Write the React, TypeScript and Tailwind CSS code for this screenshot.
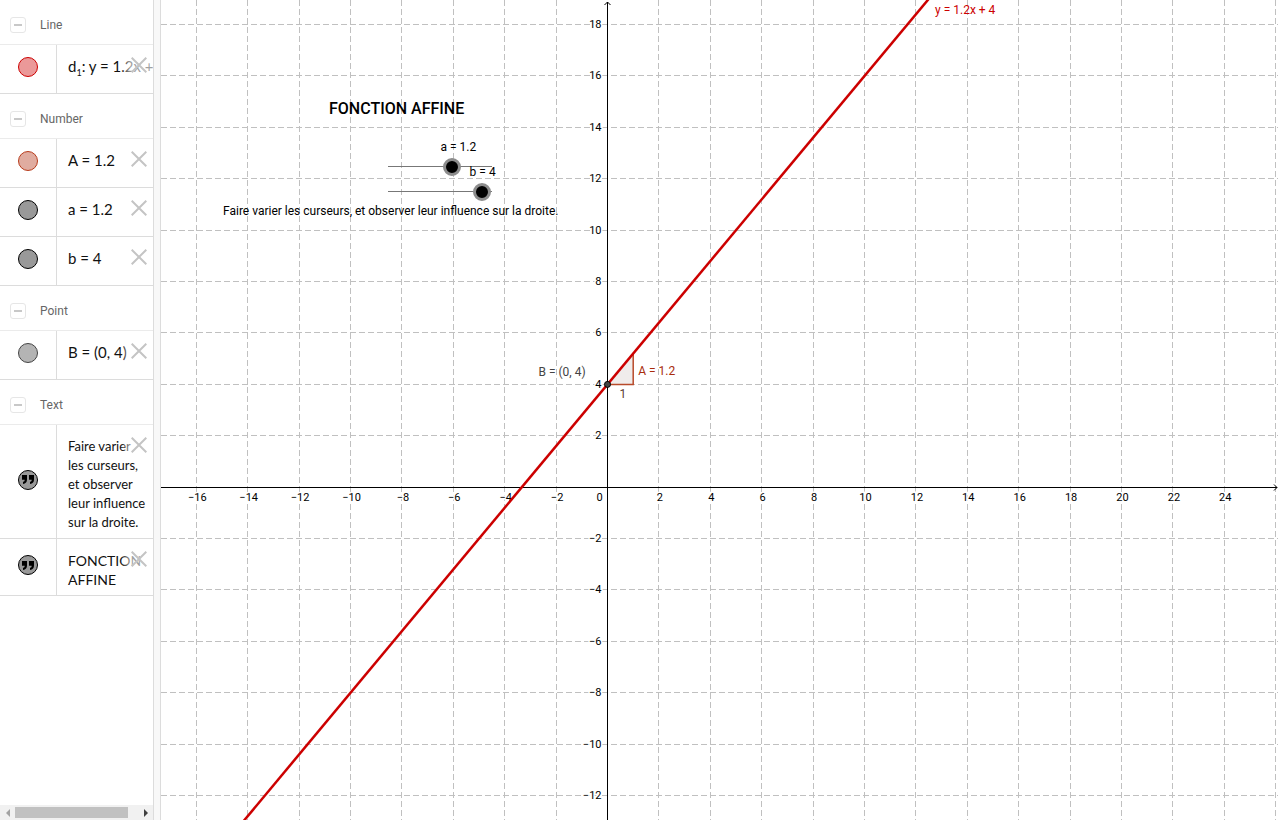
import { useLayoutEffect, useRef, useState } from "react";
import type { ReactNode } from "react";

const UNIT = 25.7;
const ORIGIN = { x: 446, y: 487 };
const SLIDER = { left: 227, width: 104, min: -5, max: 5 };

const fmt = (n: number) => String(n).replace("-", "−");

function Header({ title }: { title: string }) {
  return (
    <h2 className="flex h-[45px] items-center border-b border-[#ebebeb] pt-1.5 pl-2.5 text-[12px] text-[#666]">
      <button
        type="button"
        aria-label={`Collapse ${title}`}
        className="mr-3.5 flex size-4 items-center justify-center rounded-[3px] border border-[#e6e6e6]"
      >
        <span className="h-0.5 w-2 bg-[#c8c8c8]" />
      </button>
      {title}
    </h2>
  );
}

type RowProps = { name: string; marble: string; text?: string; quote?: boolean; children: ReactNode };

function Row({ name, marble, text = "text-[15px]", quote, children }: RowProps) {
  return (
    <div className="relative flex min-h-[49px] border-b border-[#dcdcdc]">
      <div className="flex w-[57px] shrink-0 items-center justify-center border-r border-[#dcdcdc] pb-1">
        <button
          type="button"
          aria-label={`Show or hide ${name}`}
          className={`flex size-5 items-center justify-center rounded-full border ${marble}`}
        >
          {quote && (
            <svg viewBox="0 0 12 9" className="h-[9px] w-3" fill="#000">
              <path d="M0 0h5v4.500C5 7 3.800 8.500 1 9V7C2.300 6.600 2.700 6 2.700 4.800H0z" />
              <path d="M7 0h5v4.500C12 7 10.800 8.500 8 9V7c1.300-.4 1.700-1 1.700-2.200H7z" />
            </svg>
          )}
        </button>
      </div>
      <div className={`pt-3 pb-1.5 pl-[11px] font-[Lato,sans-serif] leading-[19px] text-[#111] ${text}`}>
        {children}
      </div>
      <button
        type="button"
        aria-label={`Delete ${name}`}
        className="absolute top-0 right-0 flex h-8 w-8 items-start bg-linear-to-r from-white/0 via-white/60 via-30% to-white/60 pt-3 pl-2.5"
      >
        <svg viewBox="0 0 16 16" className="size-4" stroke="#c4c4c4" strokeWidth="2">
          <path d="M.7.7l14.600 14.600M15.300.7L.7 15.300" />
        </svg>
      </button>
    </div>
  );
}

function AlgebraView({ a, b }: { a: number; b: number }) {
  return (
    <aside className="flex w-[154px] shrink-0 flex-col border-r border-[#dcdcdc]">
      <div className="min-h-0 flex-1 overflow-hidden">
        <Header title="Line" />
        <Row name="d1" marble="border-[#cc0000] bg-[#eb9999]">
          <span className="whitespace-nowrap">
            d<span className="relative top-1 text-[9px] leading-none">1</span>: y = {fmt(a)}x + {fmt(b)}
          </span>
        </Row>
        <Header title="Number" />
        <Row name="A" marble="border-[#b83c1c] bg-[#e0aca0]">A = {fmt(a)}</Row>
        <Row name="a" marble="border-black bg-[#999]">a = {fmt(a)}</Row>
        <Row name="b" marble="border-black bg-[#999]">b = {fmt(b)}</Row>
        <Header title="Point" />
        <Row name="B" marble="border-[#444] bg-[#b4b4b4]">B = (0, {fmt(b)})</Row>
        <Header title="Text" />
        <Row name="text1" marble="border-black bg-[#999]" text="text-[13px]" quote>
          Faire varier<br />les curseurs,<br />et observer<br />leur influence<br />sur la droite.
        </Row>
        <Row name="text2" marble="border-black bg-[#999]" text="text-[14px]" quote>
          FONCTION<br />AFFINE
        </Row>
      </div>
      <div className="flex h-[15px] items-center bg-[#f1f1f1]">
        <button type="button" aria-label="Scroll left" className="flex w-[15px] justify-center">
          <svg viewBox="0 0 4 8" className="h-2 w-1" fill="#a3a3a3"><path d="M4 0v8L0 4z" /></svg>
        </button>
        <div className="flex-1">
          <div className="h-[11px] w-[92%] bg-[#c1c1c1]" />
        </div>
        <button type="button" aria-label="Scroll right" className="flex w-[15px] justify-center">
          <svg viewBox="0 0 4 8" className="h-2 w-1" fill="#404040"><path d="M0 0v8l4-4z" /></svg>
        </button>
      </div>
    </aside>
  );
}

type SliderProps = { id: string; value: number; step: number; place: string; onChange: (v: number) => void };

function Slider({ id, value, step, place, onChange }: SliderProps) {
  const handle = ((value - SLIDER.min) / (SLIDER.max - SLIDER.min)) * SLIDER.width;
  return (
    <div className={`absolute left-[218px] w-[122px] ${place}`}>
      <label htmlFor={id} className="block text-[12px] leading-4 whitespace-nowrap" style={{ marginLeft: handle - 3 }}>
        {id} = {fmt(value)}
      </label>
      <input
        id={id}
        type="range"
        min={SLIDER.min}
        max={SLIDER.max}
        step={step}
        value={value}
        onChange={(e) => onChange(Number(e.target.value))}
        className="mt-[3px] block h-[18px] w-full appearance-none bg-transparent [&::-webkit-slider-thumb]:size-[18px] [&::-webkit-slider-thumb]:appearance-none [&::-webkit-slider-thumb]:rounded-full [&::-webkit-slider-thumb]:border-3 [&::-webkit-slider-thumb]:border-[#8c8c8c] [&::-webkit-slider-thumb]:bg-black"
      />
    </div>
  );
}

export default function App() {
  const [a, setA] = useState(1.2);
  const [b, setB] = useState(4);
  const [size, setSize] = useState({ w: 1100, h: 800 });
  const view = useRef<HTMLElement>(null);

  useLayoutEffect(() => {
    const el = view.current;
    if (!el) return;
    const measure = () => setSize({ w: el.clientWidth, h: el.clientHeight });
    measure();
    const observer = new ResizeObserver(measure);
    observer.observe(el);
    return () => observer.disconnect();
  }, []);

  const { w, h } = size;
  const px = (x: number) => ORIGIN.x + 0.5 + x * UNIT;
  const py = (y: number) => ORIGIN.y + 0.2 - y * UNIT;
  const colX = (x: number) => Math.floor(px(x)) + 0.5;
  const rowY = (y: number) => Math.floor(ORIGIN.y + 0.1 - y * UNIT) + 0.5;

  // even graduations that fall inside the view, without the axes
  const ticks = (from: number, to: number) => {
    const list: number[] = [];
    for (let n = Math.ceil(from / 2) * 2; n <= to; n += 2) if (n !== 0) list.push(n);
    return list;
  };
  const xs = ticks(-ORIGIN.x / UNIT, (w - ORIGIN.x) / UNIT);
  const ys = ticks((ORIGIN.y - h) / UNIT, ORIGIN.y / UNIT);

  const x1 = -ORIGIN.x / UNIT;
  const x2 = (w - ORIGIN.x) / UNIT;

  return (
    <div className="flex h-screen bg-white pr-0.5 pb-0.5 font-[Roboto,sans-serif] text-black">
      <AlgebraView a={a} b={b} />
      <div className="w-[7px] shrink-0 border-r border-[#dcdcdc] bg-[#f8f8f8]" />

      <main ref={view} className="relative min-w-0 flex-1 overflow-hidden">
        <svg className="absolute inset-0 size-full">
          <g stroke="#c0c0c0" strokeDasharray="6 3" shapeRendering="crispEdges">
            {xs.map((x) => <line key={x} x1={colX(x)} x2={colX(x)} y1={0} y2={h} />)}
            {ys.map((y) => <line key={y} x1={0} x2={w} y1={rowY(y)} y2={rowY(y)} />)}
          </g>

          {/* axes */}
          <g stroke="#000" fill="none">
            <path d={`M0 ${rowY(0)}H${w - 1}`} />
            <path d={`M${w - 4} ${rowY(0) - 3}l3 3l-3 3`} />
            <path d={`M${px(0)} ${h}V2`} />
            <path d={`M${px(0) - 3} 5l3-3l3 3`} />
          </g>
          <g className="text-[11px] [paint-order:stroke]" stroke="#fff" strokeWidth="3" textAnchor="middle">
            {xs.filter((x) => px(x) < w - 12).map((x) => (
              <text key={x} x={px(x) + 1} y={rowY(0) + 13}>{fmt(x)}</text>
            ))}
            <text x={px(0) - 8} y={rowY(0) + 13}>0</text>
          </g>
          <g className="text-[11px] [paint-order:stroke]" stroke="#fff" strokeWidth="3" textAnchor="end">
            {ys.map((y) => <text key={y} x={px(0) - 6} y={rowY(y) + 3}>{fmt(y)}</text>)}
          </g>

          {/* slope triangle */}
          <path d={`M${px(0)} ${rowY(b)}H${px(1)}V${py(b + a)}z`} fill="#f0eceb" />
          <path d={`M${px(0)} ${rowY(b)}H${px(1)}V${py(b + a)}`} fill="none" stroke="#b84a2a" strokeWidth="1.5" />

          <line x1={px(x1)} y1={py(a * x1 + b)} x2={px(x2)} y2={py(a * x2 + b)} stroke="#cc0000" strokeWidth="2.5" />
          <circle cx={px(0)} cy={py(b)} r="3" fill="#444" stroke="#000" />

          <g className="text-[12px]">
            <text x="774" y="14" fill="#cc0000">y = {fmt(a)}x + {fmt(b)}</text>
            <text x={px(0) - 69} y={rowY(b) - 9} fill="#444">B = (0, {fmt(b)})</text>
            <text x={px(1) + 5} y={rowY(b) - 10} fill="#a82c0c">A = {fmt(a)}</text>
            <text x={px(0) + 12} y={rowY(b) + 13} fill="#5c4030">1</text>
          </g>

          <g stroke="#777" shapeRendering="crispEdges">
            <line x1={SLIDER.left} x2={SLIDER.left + SLIDER.width} y1="166.500" y2="166.500" />
            <line x1={SLIDER.left} x2={SLIDER.left + SLIDER.width} y1="191.500" y2="191.500" />
          </g>
        </svg>

        <h1 className="absolute top-[97px] left-[168px] text-[16px] leading-6 font-medium whitespace-nowrap">
          FONCTION AFFINE
        </h1>
        <Slider id="a" value={a} step={0.1} place="top-[139px]" onChange={setA} />
        <Slider id="b" value={b} step={0.1} place="top-[164px]" onChange={setB} />
        <p className="absolute top-[203px] left-[62px] text-[12px] leading-4 whitespace-nowrap">
          Faire varier les curseurs, et observer leur influence sur la droite.
        </p>
      </main>
    </div>
  );
}
